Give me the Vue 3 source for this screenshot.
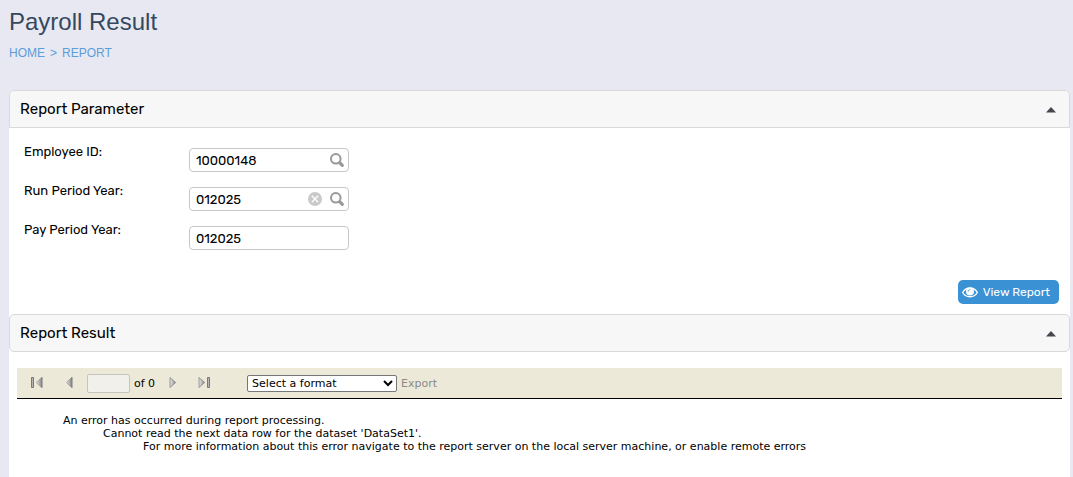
<script setup>
import { ref } from 'vue'

const fields = ref([
  { id: 'employee', label: 'Employee ID:', value: '10000148', lookup: true, clear: false },
  { id: 'run-period', label: 'Run Period Year:', value: '012025', lookup: true, clear: true },
  { id: 'pay-period', label: 'Pay Period Year:', value: '012025', lookup: false, clear: false }
])
const openParams = ref(true)
const openResult = ref(true)
</script>

<template>
  <div class="page">
    <header class="heading">
      <h1>Payroll Result</h1>
      <nav class="crumbs" aria-label="Breadcrumb">
        <a href="#">HOME</a><span>&gt;</span><a href="#">REPORT</a>
      </nav>
    </header>

    <main class="content">
      <section>
        <div class="panel-head first">
          <h2>Report Parameter</h2>
          <button class="toggle" type="button" aria-label="Toggle report parameter" @click="openParams = !openParams">
            <svg width="10" height="6" viewBox="0 0 10 6"><path d="M0 5.500 5 0l5 5.500z" fill="#44484c" /></svg>
          </button>
        </div>
        <form v-show="openParams" class="params" @submit.prevent>
          <div v-for="f in fields" :key="f.id" class="row">
            <label :for="f.id">{{ f.label }}</label>
            <div class="box">
              <input :id="f.id" v-model="f.value" type="text" />
              <button v-if="f.clear" class="icon" type="button" aria-label="Clear" @click="f.value = ''">
                <svg width="14" height="14" viewBox="0 0 14 14">
                  <circle cx="7" cy="7" r="7" fill="#c9c9c9" />
                  <path d="M3.8 3.8l6.4 6.4M10.2 3.8l-6.4 6.4" stroke="#fff" stroke-width="1.3" />
                </svg>
              </button>
              <button v-if="f.lookup" class="icon" type="button" aria-label="Look up">
                <svg width="14" height="14" viewBox="0 0 14 14" fill="none" stroke="#999">
                  <circle cx="5.8" cy="5.8" r="4.8" stroke-width="2" />
                  <path d="M9.2 9.2l1.5 1.5" stroke-width="2.2" />
                  <path d="M10.5 10.5l1.8 1.8" stroke-width="3.2" stroke-linecap="round" />
                </svg>
              </button>
            </div>
          </div>
          <div class="actions">
            <button class="view" type="submit">
              <svg width="16" height="12" viewBox="0 0 16 12">
                <path d="M.7 6.500C2.3 3.500 5 2 8 2S13.7 3.500 15.300 6.500C13.700 9.300 11 10.800 8 10.800S2.300 9.300.7 6.500z" fill="none" stroke="#fff" stroke-width="1.400" />
                <circle cx="8" cy="5.600" r="4" fill="#fff" />
                <path d="M6 5.500A2 2 0 0 1 8 3.500" fill="none" stroke="#3a92d5" stroke-width=".7" stroke-linecap="round" />
              </svg>
              View Report
            </button>
          </div>
        </form>
      </section>

      <section>
        <div class="panel-head">
          <h2>Report Result</h2>
          <button class="toggle" type="button" aria-label="Toggle report result" @click="openResult = !openResult">
            <svg width="10" height="6" viewBox="0 0 10 6"><path d="M0 5.500 5 0l5 5.500z" fill="#44484c" /></svg>
          </button>
        </div>
        <div v-show="openResult" class="result">
          <svg class="defs" width="0" height="0" aria-hidden="true">
            <defs>
              <linearGradient id="metal" x1="0" y1="0" x2="1" y2="0">
                <stop offset="0" stop-color="#e8e8e8" />
                <stop offset="1" stop-color="#858585" />
              </linearGradient>
            </defs>
          </svg>
          <div class="toolbar">
            <div class="pager">
              <button class="nav" type="button" aria-label="First page">
                <svg width="12" height="12" viewBox="0 0 12 12">
                  <path d="M.5.5h2v10h-2z" fill="#b4b4b4" stroke="#77787a" />
                  <path d="M11 0v11L5 5.500z" fill="url(#metal)" />
                  <path d="M11 .2v10.600" stroke="#77787a" />
                  <path d="M11 0 5.300 5.500 11 11" fill="none" stroke="#999" stroke-width=".7" />
                </svg>
              </button>
              <button class="nav prev" type="button" aria-label="Previous page">
                <svg width="7" height="12" viewBox="0 0 7 12">
                  <path d="M6 0v11L0 5.500z" fill="url(#metal)" />
                  <path d="M6 .2v10.600" stroke="#77787a" />
                  <path d="M6 0 .5 5.500 6 11" fill="none" stroke="#999" stroke-width=".7" />
                </svg>
              </button>
              <input class="page-no" type="text" aria-label="Current page" disabled />
              <span class="total">of 0</span>
              <button class="nav next" type="button" aria-label="Next page">
                <svg width="7" height="12" viewBox="0 0 7 12">
                  <path d="M1 0v11l6-5.500z" fill="url(#metal)" />
                  <path d="M1 .5v10l5.300-5z" fill="none" stroke="#85868a" stroke-width=".8" />
                </svg>
              </button>
              <button class="nav last" type="button" aria-label="Last page">
                <svg width="12" height="12" viewBox="0 0 12 12">
                  <path d="M1 0v11l6-5.500z" fill="url(#metal)" />
                  <path d="M1 .5v10l5.300-5z" fill="none" stroke="#85868a" stroke-width=".8" />
                  <path d="M9.500.5h2v10h-2z" fill="#b4b4b4" stroke="#77787a" />
                </svg>
              </button>
            </div>
            <div class="export">
              <select aria-label="Export format">
                <option>Select a format</option>
              </select>
              <a href="#">Export</a>
            </div>
          </div>
          <ul class="errors">
            <li>An error has occurred during report processing.
              <ul>
                <li>Cannot read the next data row for the dataset 'DataSet1'.
                  <ul>
                    <li>For more information about this error navigate to the report server on the local server machine, or enable remote errors</li>
                  </ul>
                </li>
              </ul>
            </li>
          </ul>
        </div>
      </section>
    </main>
  </div>
</template>

<style>
body {
  background: #e8e8f2;
}
</style>

<style scoped>
* {
  box-sizing: border-box;
}
.page {
  min-height: 100vh;
  display: flex;
  flex-direction: column;
  padding: 0 3px 0 9px;
  color: #000;
  font: 13px/16px Rubik, Roboto, sans-serif;
}
.heading {
  padding: 8px 0 29px;
  font-family: "Liberation Sans", Arial, sans-serif;
}
h1 {
  margin: 0;
  font-size: 24px;
  line-height: 28px;
  font-weight: 400;
  color: #34495e;
}
.crumbs {
  display: flex;
  gap: 5px;
  margin-top: 9px;
  font-size: 12px;
  line-height: 16px;
  color: #5c9ddb;
}
a {
  color: inherit;
  text-decoration: none;
}
.content {
  flex: 1;
  background: #fff;
  border-radius: 5px 5px 0 0;
}
.panel-head {
  display: flex;
  align-items: center;
  justify-content: space-between;
  height: 38px;
  padding: 2px 10px 0;
  background: #f7f7f7;
  border: 1px solid #d9d9d9;
  border-radius: 5px;
}
.panel-head.first {
  border-radius: 5px 5px 0 0;
}
h2 {
  margin: 0;
  padding-bottom: 2px;
  font-size: 15px;
  line-height: 20px;
  font-weight: 400;
}
button {
  padding: 0;
  border: 0;
  background: none;
  font: inherit;
  color: inherit;
}
svg {
  display: block;
}
.toggle {
  display: grid;
  place-items: center;
  width: 16px;
  height: 16px;
}
.params {
  padding: 14px 11px 10px 15px;
}
.row {
  display: flex;
  height: 39px;
}
.row label {
  width: 165px;
  padding-top: 2px;
}
.box {
  display: flex;
  align-items: center;
  gap: 8px;
  width: 160px;
  height: 24px;
  margin-top: 6px;
  padding: 0 4px 0 6px;
  border: 1px solid #c8c8c8;
  border-radius: 4px;
}
.box input {
  flex: 1;
  min-width: 0;
  padding: 2px 0 0;
  border: 0;
  outline: 0;
  background: none;
  color: #000;
  font: 13px/18px Rubik, Roboto, sans-serif;
}
.actions {
  display: flex;
  justify-content: flex-end;
  margin-top: 21px;
}
.view {
  display: flex;
  align-items: center;
  gap: 5px;
  height: 24px;
  padding: 0 9px 0 4px;
  border-radius: 5px;
  background: #3a92d5;
  color: #fff;
  font-size: 12px;
}
.result {
  padding: 16px 8px;
  font: 11px/13px Tahoma, "DejaVu Sans", sans-serif;
}
.defs {
  position: absolute;
}
.toolbar {
  display: flex;
  align-items: center;
  gap: 37px;
  height: 31px;
  padding: 0 14px;
  background: #ece9d8;
  border-bottom: 1px solid #000;
}
.pager,
.export {
  display: flex;
  align-items: center;
}
.prev {
  margin-left: 23px;
}
.page-no {
  width: 43px;
  height: 19px;
  margin: 0 4px 0 14px;
  border: 1px solid #c5c4bd;
  border-radius: 2px;
  background: #f2f0ea;
}
.next {
  margin-left: 14px;
}
.last {
  margin-left: 22px;
}
.export {
  gap: 4px;
}
select {
  width: 150px;
  height: 17px;
  padding: 0;
  border: 1px solid #767676;
  border-radius: 2px;
  background: #fff;
  color: #000;
  font: inherit;
}
.export a {
  color: #8a8a8a;
}
ul {
  margin: 0;
  padding: 0 0 0 40px;
  list-style: none;
}
.errors {
  padding-left: 46px;
  padding-top: 15px;
}
</style>
